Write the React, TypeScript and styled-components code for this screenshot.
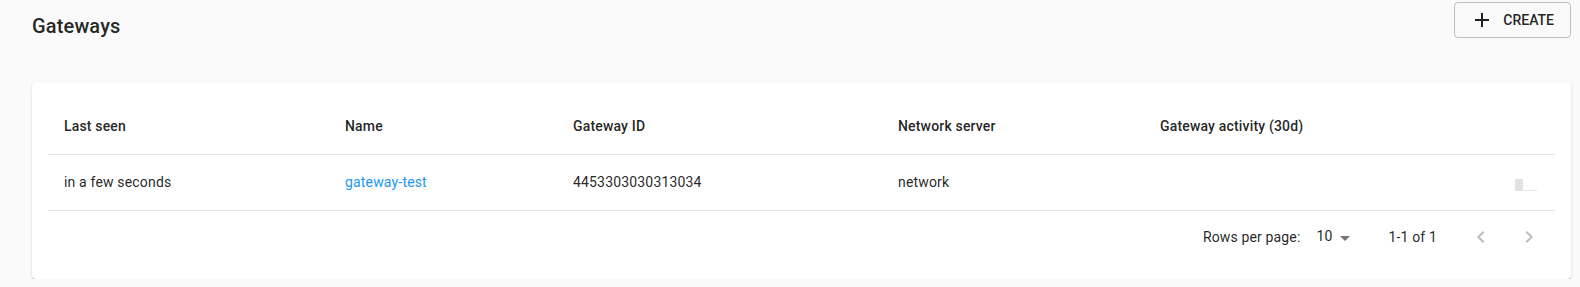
import React from "react";
import styled, { createGlobalStyle } from "styled-components";

const GlobalStyle = createGlobalStyle`
  html, body {
    margin: 0;
    padding: 0;
    background: #fafafa;
    font-family: Roboto, "Liberation Sans", Arial, sans-serif;
    color: rgba(0, 0, 0, 0.87);
  }
  * { box-sizing: border-box; }
`;

const Page = styled.div`
  width: 1580px;
  padding: 2px 9px 0 32px;
`;

const Header = styled.div`
  display: flex;
  justify-content: space-between;
  align-items: flex-start;
`;

const Title = styled.h1`
  margin: 8px 0 0 0;
  font-size: 20px;
  line-height: 32px;
  font-weight: 500;
  letter-spacing: 0.0075em;
  color: rgba(0, 0, 0, 0.87);
`;

const OutlinedButton = styled.button`
  display: inline-flex;
  align-items: center;
  height: 36px;
  padding: 0 16px 0 15px;
  background: transparent;
  border: 1px solid rgba(0, 0, 0, 0.23);
  border-radius: 4px;
  font-family: Roboto, "Liberation Sans", Arial, sans-serif;
  font-size: 14px;
  font-weight: 500;
  letter-spacing: 0;
  text-transform: uppercase;
  color: rgba(0, 0, 0, 0.87);
  cursor: pointer;
`;

const ButtonIcon = styled.span`
  display: inline-flex;
  width: 24px;
  height: 24px;
  margin-right: 9px;
`;

const Card = styled.div`
  margin-top: 40px;
  background: #fff;
  border-radius: 4px;
  box-shadow: 0px 2px 1px -1px rgba(0, 0, 0, 0.2),
    0px 1px 1px 0px rgba(0, 0, 0, 0.14), 0px 1px 3px 0px rgba(0, 0, 0, 0.12);
  padding: 16px;
`;

const Table = styled.table`
  width: 100%;
  border-collapse: collapse;
  table-layout: fixed;
  letter-spacing: 0.01071em;
`;

const HeadCell = styled.th<{ $w?: number }>`
  ${(p) => (p.$w ? `width: ${p.$w}px;` : "")}
  height: 56px;
  padding: 0 16px;
  text-align: left;
  font-size: 14px;
  font-weight: 500;
  line-height: 20px;
  color: rgba(0, 0, 0, 0.87);
  border-bottom: 1px solid rgba(224, 224, 224, 1);
`;

const Cell = styled.td<{ $align?: string }>`
  height: 56px;
  padding: 0 16px;
  font-size: 14px;
  font-weight: 400;
  line-height: 20px;
  color: rgba(0, 0, 0, 0.87);
  text-align: ${(p) => p.$align || "left"};
  border-bottom: 1px solid rgba(224, 224, 224, 1);
`;

const Link = styled.a`
  color: #2196f3;
  text-decoration: none;
`;

const Chart = styled.svg`
  display: inline-block;
  vertical-align: middle;
  margin-top: 6px;
`;

const Pagination = styled.div`
  display: flex;
  justify-content: flex-end;
  align-items: center;
  height: 52px;
  padding-right: 2px;
  font-size: 14px;
  letter-spacing: 0.01071em;
  color: rgba(0, 0, 0, 0.87);
`;

const Caption = styled.span`
  line-height: 20px;
`;

const SelectBox = styled.div`
  position: relative;
  display: flex;
  align-items: center;
  margin: 0 32px 0 8px;
  padding: 0 24px 2px 8px;
  line-height: 20px;
`;

const SelectArrow = styled.svg`
  position: absolute;
  right: 0;
  top: 50%;
  margin-top: -11px;
  fill: rgba(0, 0, 0, 0.54);
`;

const Actions = styled.div`
  display: flex;
  margin-left: 20px;
`;

const IconButton = styled.button`
  width: 48px;
  height: 48px;
  padding: 12px;
  border: none;
  background: transparent;
  display: flex;
  align-items: center;
  justify-content: center;
  fill: rgba(0, 0, 0, 0.26);
`;

const columns: { label: string; w?: number }[] = [
  { label: "Last seen", w: 281 },
  { label: "Name", w: 228 },
  { label: "Gateway ID", w: 325 },
  { label: "Network server", w: 262 },
  { label: "Gateway activity (30d)" },
];

export default function App() {
  return (
    <>
      <GlobalStyle />
      <Page>
        <Header>
          <Title>Gateways</Title>
          <OutlinedButton>
            <ButtonIcon>
              <svg width="24" height="24" viewBox="0 0 24 24" fill="rgba(0,0,0,0.87)">
                <path d="M19 13h-6v6h-2v-6H5v-2h6V5h2v6h6v2z" />
              </svg>
            </ButtonIcon>
            Create
          </OutlinedButton>
        </Header>
        <Card>
          <Table>
            <thead>
              <tr>
                {columns.map((c) => (
                  <HeadCell key={c.label} $w={c.w}>
                    {c.label}
                  </HeadCell>
                ))}
              </tr>
            </thead>
            <tbody>
              <tr>
                <Cell>in a few seconds</Cell>
                <Cell>
                  <Link href="#">gateway-test</Link>
                </Cell>
                <Cell>4453303030313034</Cell>
                <Cell>network</Cell>
                <Cell $align="right">
                  <Chart width="24" height="14" viewBox="0 0 24 14">
                    <rect x="0" y="0" width="8" height="12" fill="#e2e2e2" />
                    <rect x="9" y="11" width="13" height="1" fill="#e6e6e6" />
                  </Chart>
                </Cell>
              </tr>
            </tbody>
          </Table>
          <Pagination>
            <Caption>Rows per page:</Caption>
            <SelectBox>
              10
              <SelectArrow width="24" height="24" viewBox="0 0 24 24">
                <path d="M7 10l5 5 5-5z" />
              </SelectArrow>
            </SelectBox>
            <Caption>1-1 of 1</Caption>
            <Actions>
              <IconButton aria-label="previous page">
                <svg width="24" height="24" viewBox="0 0 24 24">
                  <path d="M15.41 7.41L14 6l-6 6 6 6 1.41-1.41L10.83 12z" />
                </svg>
              </IconButton>
              <IconButton aria-label="next page">
                <svg width="24" height="24" viewBox="0 0 24 24">
                  <path d="M10 6L8.59 7.41 13.17 12l-4.58 4.59L10 18l6-6z" />
                </svg>
              </IconButton>
            </Actions>
          </Pagination>
        </Card>
      </Page>
    </>
  );
}
